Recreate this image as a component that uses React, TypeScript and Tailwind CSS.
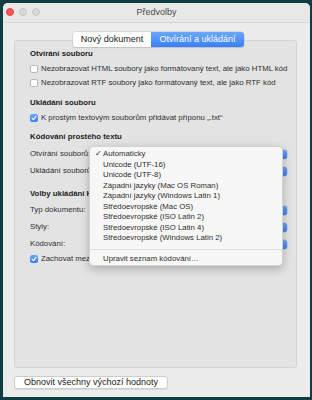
import React from 'react';

const font = { fontFamily: '"Liberation Sans", Arial, sans-serif' };

function Checkbox({ checked }: { checked?: boolean }) {
    if (checked) {
        return (
            <span className="w-[8px] h-[8px] rounded-[2px] bg-gradient-to-b from-[#6aa6fb] to-[#3b7ef3] flex items-center justify-center shrink-0">
                <svg width="6" height="6" viewBox="0 0 6 6">
                    <path d="M1 3.2 L2.4 4.6 L5 1.3" stroke="white" strokeWidth="1.1" fill="none" strokeLinecap="round" strokeLinejoin="round" />
                </svg>
            </span>
        );
    }
    return <span className="w-[8px] h-[8px] rounded-[2px] bg-white border border-[#b9b9b9] shrink-0" />;
}

function CheckRow({ label, checked, className }: { label: string; checked?: boolean; className: string }) {
    return (
        <div className={`h-[12px] flex items-center gap-[3px] ${className}`}>
            <Checkbox checked={checked} />
            <span className="whitespace-nowrap">{label}</span>
        </div>
    );
}

function PopupRow({ label, className }: { label: string; className: string }) {
    return (
        <div className={`h-[12px] flex items-center ${className}`}>
            <span className="whitespace-nowrap">{label}</span>
            <div className="ml-auto w-[188px] h-[11px] bg-white rounded-[3px] border border-[#cfcfcf] flex justify-end overflow-hidden">
                <div className="w-[7px] h-full bg-gradient-to-b from-[#6aa6fb] to-[#3b7ef3]" />
            </div>
        </div>
    );
}

const encodings = [
    'Automaticky',
    'Unicode (UTF-16)',
    'Unicode (UTF-8)',
    'Západní jazyky (Mac OS Roman)',
    'Západní jazyky (Windows Latin 1)',
    'Středoevropské (Mac OS)',
    'Středoevropské (ISO Latin 2)',
    'Středoevropské (ISO Latin 4)',
    'Středoevropské (Windows Latin 2)',
];

export default function App() {
    return (
        <div className="relative w-[312px] h-[400px] bg-[#113d40] pt-[3px] pl-[3px] pr-[2px] pb-[3px] text-[7.8px] text-[#2e2e2e]" style={font}>
            <div className="h-full bg-[#ececec] rounded-t-[5px] flex flex-col">
                {/* title bar */}
                <div className="relative h-[20px] flex items-center justify-center border-b border-[#d6d6d6] bg-[#e8e8e8] rounded-t-[5px]">
                    <div className="absolute left-[3px] top-[5px] flex gap-[5px]">
                        <span className="w-[8px] h-[8px] rounded-full bg-[#fc5753] border border-[#df4744]" />
                        <span className="w-[8px] h-[8px] rounded-full bg-[#d8d8d8] border border-[#c8c8c8]" />
                        <span className="w-[8px] h-[8px] rounded-full bg-[#d8d8d8] border border-[#c8c8c8]" />
                    </div>
                    <span className="text-[9px] text-[#4a4a4a]">Předvolby</span>
                </div>

                <div className="flex flex-col pl-[11px] pr-[13px] pt-[9px]">
                    {/* tabs */}
                    <div className="relative z-10 self-center flex h-[15px] text-[9px] rounded-[3px] shadow-[0_0_0_0.5px_#c4c4c4,0_1px_1px_rgba(0,0,0,0.15)] ml-[6px]">
                        <div className="w-[78px] bg-white rounded-l-[3px] flex items-center justify-center text-[#222]">Nový dokument</div>
                        <div className="w-[93px] bg-gradient-to-b from-[#6aa8fb] to-[#3a7ff5] rounded-r-[3px] flex items-center justify-center text-white">Otvírání a ukládání</div>
                    </div>

                    {/* group box */}
                    <div className="mt-[-7px] h-[328px] bg-[#e3e3e3] border border-[#d4d4d4] rounded-[3px] pl-[15px] pr-[8px] pt-[7px] flex flex-col">
                        <div className="h-[12px] flex items-center font-bold text-[#222]">Otvírání souboru</div>
                        <CheckRow className="mt-[3px]" label="Nezobrazovat HTML soubory jako formátovaný text, ale jako HTML kód" />
                        <CheckRow className="mt-[2px]" label="Nezobrazovat RTF soubory jako formátovaný text, ale jako RTF kód" />

                        <div className="mt-[8px] h-[12px] flex items-center font-bold text-[#222]">Ukládání souboru</div>
                        <CheckRow className="mt-[3px]" checked label="K prostým textovým souborům přidávat příponu „.txt“" />

                        <div className="mt-[7px] h-[12px] flex items-center font-bold text-[#222]">Kódování prostého textu</div>
                        <PopupRow className="mt-[5px]" label="Otvírání souborů:" />
                        <PopupRow className="mt-[5px]" label="Ukládání souborů:" />

                        <div className="mt-[11px] h-[12px] flex items-center font-bold text-[#222]">Volby ukládání HTML</div>
                        <PopupRow className="mt-[4px]" label="Typ dokumentu:" />
                        <PopupRow className="mt-[5px]" label="Styly:" />
                        <PopupRow className="mt-[5px]" label="Kódování:" />
                        <CheckRow className="mt-[3px]" checked label="Zachovat mezery" />
                    </div>

                    <div className="mt-[8px] self-start w-[154px] h-[13px] bg-white rounded-[3px] border border-[#cdcdcd] shadow-[0_1px_0_rgba(0,0,0,0.08)] flex items-center justify-center text-[9px] text-[#222]">
                        Obnovit všechny výchozí hodnoty
                    </div>
                </div>
            </div>

            {/* open encoding menu */}
            <div className="absolute left-[89px] top-[146px] w-[194px] bg-[#f7f7f7] rounded-[4px] border border-[#d2d2d2] shadow-[0_3px_10px_rgba(0,0,0,0.25)] pt-[2px] pb-[1px]">
                {encodings.map((e, i) => (
                    <div key={e} className="h-[10.5px] flex items-center text-[#2e2e2e]">
                        <span className="w-[13px] pl-[5px] text-[8px]">{i === 0 ? '✓' : ''}</span>
                        <span>{e}</span>
                    </div>
                ))}
                <div className="mt-[5px] mb-[4px] border-t border-[#dcdcdc]" />
                <div className="h-[10.5px] flex items-center pl-[13px] text-[#2e2e2e]">Upravit seznam kódování…</div>
            </div>
        </div>
    );
}
